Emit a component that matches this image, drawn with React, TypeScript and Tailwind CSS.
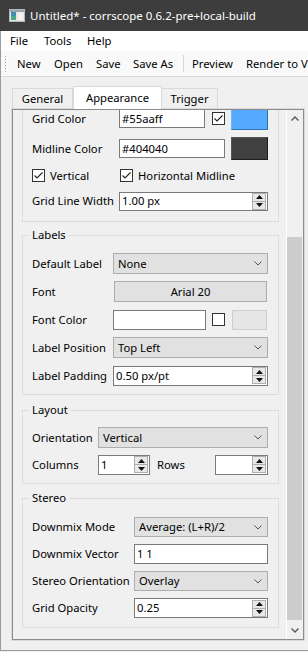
import React from "react"

const font = "font-['Noto_Sans',sans-serif]"

function Chevron() {
  return (
    <svg width="8" height="5" viewBox="0 0 8 5" className="shrink-0">
      <polyline points="0.5,0.5 4,4 7.5,0.5" fill="none" stroke="#555" strokeWidth="1" />
    </svg>
  )
}

function Combo({ value, className = "" }: { value: string; className?: string }) {
  return (
    <div className={`h-full flex items-center bg-[#e1e1e1] border border-[#adadad] pl-[4px] pr-[5px] ${className}`}>
      <span className="flex-1 truncate">{value}</span>
      <Chevron />
    </div>
  )
}

function LineEdit({ value, className = "" }: { value: string; className?: string }) {
  return (
    <div className={`h-full flex items-center bg-white border border-[#7a7a7a] pl-[2px] ${className}`}>
      <span className="truncate">{value}</span>
    </div>
  )
}

function SpinArrows() {
  return (
    <div className="flex flex-col w-[14px] h-[17px] border border-[#adadad] bg-[#e8e8e8] shrink-0">
      <div className="flex-1 flex items-center justify-center border-b border-[#adadad]">
        <svg width="7" height="4" viewBox="0 0 7 4">
          <polygon points="3.5,0 7,4 0,4" fill="#111" />
        </svg>
      </div>
      <div className="flex-1 flex items-center justify-center">
        <svg width="7" height="4" viewBox="0 0 7 4">
          <polygon points="0,0 7,0 3.5,4" fill="#111" />
        </svg>
      </div>
    </div>
  )
}

function Spin({ value, className = "" }: { value: string; className?: string }) {
  return (
    <div className={`h-full flex items-center bg-white border border-[#7a7a7a] pl-[2px] pr-[1px] ${className}`}>
      <span className="flex-1 truncate">{value}</span>
      <SpinArrows />
    </div>
  )
}

function CheckBox({ checked }: { checked: boolean }) {
  return (
    <div className="w-[13px] h-[13px] border border-[#333] bg-white shrink-0 flex items-center justify-center">
      {checked && (
        <svg width="11" height="11" viewBox="0 0 11 11">
          <polyline points="1.5,5.5 4,8 9.5,2.5" fill="none" stroke="#222" strokeWidth="1.1" />
        </svg>
      )}
    </div>
  )
}

function GroupTitle({ title }: { title: string }) {
  return (
    <span className="absolute left-[6px] -top-[9px] px-[3px] bg-[#f0f0f0] leading-[16px]">{title}</span>
  )
}

function TitleBar() {
  return (
    <div className="h-[31px] bg-[#3d3d3d] flex items-center pl-[9px] gap-[5px] text-white text-[11.5px]">
      <svg width="16" height="13" viewBox="0 0 16 13">
        <rect x="0.5" y="0.5" width="15" height="12" fill="#e8e8e8" stroke="#b8b8b8" />
        <rect x="1" y="1" width="14" height="2" fill="#9aa5b0" />
        <rect x="2" y="3" width="5" height="8" fill="#3d8fb5" />
        <rect x="2" y="7" width="5" height="4" fill="#4caa8a" />
        <rect x="9" y="4" width="5" height="7" fill="#f4f4f4" />
      </svg>
      <span>Untitled* - corrscope 0.6.2-pre+local-build</span>
    </div>
  )
}

function MenuBar() {
  return (
    <div className="h-[20px] bg-white flex items-center pl-[9px]">
      <span className="w-[34px]">File</span>
      <span className="w-[43px]">Tools</span>
      <span>Help</span>
    </div>
  )
}

function ToolBar() {
  return (
    <div className="h-[26px] bg-[#f9f9f9] border-b border-[#dadada] flex items-center overflow-hidden">
      <svg width="3" height="18" viewBox="0 0 3 18" className="ml-[3px] mr-[10px] shrink-0">
        {[1, 4, 7, 10, 13, 16].map((y) => (
          <rect key={y} x="1" y={y} width="1" height="1" fill="#a8a8a8" />
        ))}
      </svg>
      <span className="w-[37px] shrink-0">New</span>
      <span className="w-[42px] shrink-0">Open</span>
      <span className="w-[37px] shrink-0">Save</span>
      <span className="w-[50px] shrink-0">Save As</span>
      <span className="w-[1px] h-[17px] bg-[#d6d6d6] shrink-0" />
      <span className="ml-[8px] w-[54px] shrink-0">Preview</span>
      <span className="shrink-0">Render to Video</span>
    </div>
  )
}

function Tabs() {
  return (
    <div className="h-[22px] flex items-end pl-[1px]">
      <div className="h-[20px] w-[61px] border border-b-0 border-[#d9d9d9] bg-[#f0f0f0] flex items-center justify-center">
        General
      </div>
      <div className="relative z-10 -mb-[1px] h-[23px] w-[89px] border border-b-0 border-[#d9d9d9] bg-white flex items-start pt-[3px] justify-center">
        Appearance
      </div>
      <div className="h-[20px] w-[56px] border border-b-0 border-l-0 border-[#d9d9d9] bg-[#f0f0f0] flex items-center justify-center">
        Trigger
      </div>
    </div>
  )
}

function GridGroup() {
  return (
    <div className="-mt-[3px] ml-[9px] mr-[7px] border-x border-b border-[#dcdcdc] pl-[9px] pr-[10px] pb-[10px] flex flex-col">
      <div className="h-[23px] flex items-center">
        <span className="w-[87px] shrink-0">Grid Color</span>
        <div className="w-[86px] h-[19px] shrink-0">
          <LineEdit value="#55aaff" />
        </div>
        <div className="ml-[7px]">
          <CheckBox checked />
        </div>
        <div className="ml-[6px] flex-1 h-[23px] bg-[#55aaff] border border-[#6fb8ff] border-b-[#2e73b8] border-r-[#2e73b8]" />
      </div>
      <div className="mt-[7px] h-[23px] flex items-center">
        <span className="w-[87px] shrink-0">Midline Color</span>
        <div className="w-[106px] h-[19px] shrink-0">
          <LineEdit value="#404040" />
        </div>
        <div className="ml-[6px] flex-1 h-[23px] bg-[#404040] border border-[#555] border-b-[#1e1e1e] border-r-[#1e1e1e]" />
      </div>
      <div className="mt-[7px] h-[17px] flex items-center">
        <div className="w-[88px] flex items-center gap-[5px] shrink-0">
          <CheckBox checked />
          <span>Vertical</span>
        </div>
        <div className="flex items-center gap-[5px]">
          <CheckBox checked />
          <span>Horizontal Midline</span>
        </div>
      </div>
      <div className="mt-[7px] h-[20px] flex items-center">
        <span className="w-[87px] shrink-0">Grid Line Width</span>
        <div className="flex-1 h-[19px]">
          <Spin value="1.00 px" />
        </div>
      </div>
    </div>
  )
}

function LabelsGroup() {
  return (
    <div className="relative mt-[13px] ml-[9px] mr-[7px] border border-[#dcdcdc] pl-[9px] pr-[10px] pt-[17px] pb-[8px] flex flex-col gap-[7px]">
      <GroupTitle title="Labels" />
      <div className="h-[21px] flex items-center">
        <span className="w-[81px] shrink-0">Default Label</span>
        <div className="flex-1 h-[21px]">
          <Combo value="None" />
        </div>
      </div>
      <div className="h-[21px] flex items-center">
        <span className="w-[82px] shrink-0">Font</span>
        <div className="flex-1 h-[21px] mr-[1px] bg-[#e1e1e1] border border-[#adadad] flex items-center justify-center">
          Arial 20
        </div>
      </div>
      <div className="h-[21px] flex items-center">
        <span className="w-[81px] shrink-0">Font Color</span>
        <div className="w-[93px] h-[20px] shrink-0">
          <LineEdit value="" />
        </div>
        <div className="ml-[6px]">
          <CheckBox checked={false} />
        </div>
        <div className="ml-[7px] flex-1 h-[20px] mr-[1px] bg-[#e6e6e6] border border-[#cfcfcf]" />
      </div>
      <div className="h-[21px] flex items-center">
        <span className="w-[81px] shrink-0">Label Position</span>
        <div className="flex-1 h-[21px]">
          <Combo value="Top Left" />
        </div>
      </div>
      <div className="h-[21px] flex items-center">
        <span className="w-[81px] shrink-0">Label Padding</span>
        <div className="flex-1 h-[20px]">
          <Spin value="0.50 px/pt" />
        </div>
      </div>
    </div>
  )
}

function LayoutGroup() {
  return (
    <div className="relative mt-[15px] ml-[9px] mr-[7px] border border-[#dcdcdc] pl-[9px] pr-[10px] pt-[16px] pb-[8px] flex flex-col gap-[6px]">
      <GroupTitle title="Layout" />
      <div className="h-[21px] flex items-center">
        <span className="w-[66px] shrink-0">Orientation</span>
        <div className="flex-1 h-[21px]">
          <Combo value="Vertical" />
        </div>
      </div>
      <div className="h-[21px] flex items-center">
        <span className="w-[66px] shrink-0">Columns</span>
        <div className="w-[52px] h-[20px] shrink-0">
          <Spin value="1" />
        </div>
        <span className="ml-[7px] w-[58px] shrink-0">Rows</span>
        <div className="flex-1 h-[20px]">
          <Spin value="" />
        </div>
      </div>
    </div>
  )
}

function StereoGroup() {
  return (
    <div className="relative mt-[14px] ml-[9px] mr-[7px] border border-[#dcdcdc] pl-[9px] pr-[10px] pt-[18px] pb-[9px] flex flex-col gap-[7px]">
      <GroupTitle title="Stereo" />
      <div className="h-[20px] flex items-center">
        <span className="w-[102px] shrink-0">Downmix Mode</span>
        <div className="flex-1 h-[20px]">
          <Combo value="Average: (L+R)/2" />
        </div>
      </div>
      <div className="h-[20px] flex items-center">
        <span className="w-[102px] shrink-0">Downmix Vector</span>
        <div className="flex-1 h-[20px]">
          <LineEdit value="1 1" />
        </div>
      </div>
      <div className="h-[20px] flex items-center">
        <span className="w-[102px] shrink-0">Stereo Orientation</span>
        <div className="flex-1 h-[20px]">
          <Combo value="Overlay" />
        </div>
      </div>
      <div className="h-[20px] flex items-center">
        <span className="w-[102px] shrink-0">Grid Opacity</span>
        <div className="flex-1 h-[20px]">
          <Spin value="0.25" />
        </div>
      </div>
    </div>
  )
}

function ScrollBar() {
  return (
    <div className="w-[17px] border-l border-white bg-[#f0f0f0] flex flex-col shrink-0">
      <div className="h-[17px] flex items-center justify-center">
        <svg width="8" height="5" viewBox="0 0 8 5">
          <polyline points="0.5,4.5 4,1 7.5,4.5" fill="none" stroke="#606060" strokeWidth="1.5" />
        </svg>
      </div>
      <div className="flex-1 flex flex-col">
        <div className="mt-[110px] h-[383px] mr-[1px] bg-[#cdcdcd]" />
      </div>
      <div className="h-[17px] flex items-center justify-center">
        <svg width="8" height="5" viewBox="0 0 8 5">
          <polyline points="0.5,0.5 4,4 7.5,0.5" fill="none" stroke="#606060" strokeWidth="1.5" />
        </svg>
      </div>
    </div>
  )
}

export default function App() {
  return (
    <div className={`w-[308px] h-[652px] bg-[#f0f0f0] overflow-hidden text-[11.25px] leading-[16px] text-black whitespace-nowrap ${font}`}>
      <TitleBar />
      <div className="h-[620px] border-l border-b border-[#9b9b9b] flex flex-col">
        <MenuBar />
        <ToolBar />
        <div className="pl-[10px] pr-[3px] pt-[9px]">
          <Tabs />
          <div className="h-[533px] border border-[#d9d9d9] bg-white">
            <div className="h-full border border-[#8c8c8c] flex">
              <div className="flex-1 bg-[#f0f0f0] overflow-hidden flex flex-col">
                <GridGroup />
                <LabelsGroup />
                <LayoutGroup />
                <StereoGroup />
              </div>
              <ScrollBar />
            </div>
          </div>
        </div>
      </div>
    </div>
  )
}
